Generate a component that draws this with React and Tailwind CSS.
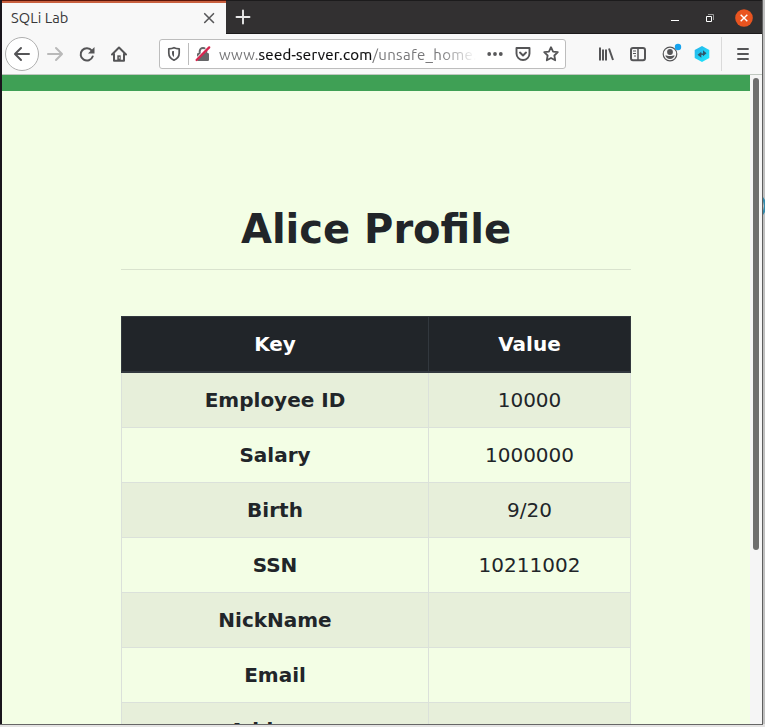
import React from "react";

const rows = [
  ["Employee ID", "10000"],
  ["Salary", "1000000"],
  ["Birth", "9/20"],
  ["SSN", "10211002"],
  ["NickName", ""],
  ["Email", ""],
  ["Address", ""],
];

function Icon({ children, className = "" }) {
  return (
    <svg
      width="16"
      height="16"
      viewBox="0 0 16 16"
      fill="none"
      stroke="#555557"
      strokeWidth="2"
      strokeLinecap="round"
      strokeLinejoin="round"
      className={"shrink-0 overflow-visible " + className}
    >
      {children}
    </svg>
  );
}

function Slot({ children }) {
  return <div className="flex h-8 w-8 shrink-0 items-center justify-center">{children}</div>;
}

function TabBar() {
  return (
    <div className="flex h-[34px] shrink-0 bg-[#323031]">
      <div className="flex w-[224px] shrink-0 flex-col border-t border-[#5e1608] bg-[#f8f8f8]">
        <div className="h-[2px] shrink-0 bg-[#c9603f]" />
        <div className="flex flex-1 items-center pb-[1px] pl-[9px] pr-[11px]">
          <span className="flex-1 text-[14.67px] leading-[18px] tracking-[0.05px] text-[#38383a]">SQLi Lab</span>
          <svg width="12" height="12" viewBox="0 0 12 12" stroke="#58585a" strokeWidth="1.6" strokeLinecap="round">
            <path d="M1.7 1.7l8.8 8.8M10.5 1.7l-8.8 8.8" />
          </svg>
        </div>
      </div>
      <div className="flex flex-1 items-center border-b border-t border-b-[#1c1b1c] border-t-[#1c1b1c] pl-[9px]">
        <svg width="16" height="16" viewBox="0 0 16 16" stroke="#e9e9e9" strokeWidth="1.9" strokeLinecap="round">
          <path d="M8 1.5v13M1.5 8h13" />
        </svg>
        <div className="ml-auto flex items-center pr-[9px] pt-px">
          <svg width="8" height="8" viewBox="0 0 8 8" className="mr-[27px]">
            <path d="M0 6.5h8" stroke="#fff" />
          </svg>
          <svg width="8" height="8" viewBox="0 0 8 8" fill="none" className="mr-[21px]">
            <path d="M2 .5h5.5v5.5" stroke="#9a9a9a" />
            <path d="M.5 2.5h5v5h-5z" stroke="#fff" />
          </svg>
          <svg width="18" height="18" viewBox="0 0 19 19">
            <circle cx="9.5" cy="9.5" r="9.3" fill="#e95420" />
            <path d="M6 6l7 7M13 6l-7 7" stroke="#fff" strokeWidth="1.5" />
          </svg>
        </div>
      </div>
    </div>
  );
}

function UrlBar() {
  return (
    <div className="ml-[24px] flex h-[30px] w-[407px] shrink-0 items-center rounded-[3px] border border-[#bdbdbd] bg-white">
      <Icon className="ml-[6px]">
        <path d="M8 1.7C6.5 2.4 4.6 2.7 2.8 2.8V7c0 3.7 1.8 5.8 5.2 7.2 3.4-1.4 5.2-3.5 5.2-7.2V2.8C11.4 2.7 9.500 2.400 8 1.700z" strokeWidth="1.7" />
        <path d="M8 5v6C6.500 10 6 8.800 6 7V5.200z" fill="#555557" stroke="none" />
      </Icon>
      <div className="ml-[6px] h-[22px] w-px bg-[#bcbcbc]" />
      <Icon className="ml-[6px]">
        <rect x="2" y="7" width="12" height="8" rx="1.3" fill="#666668" stroke="none" />
        <path d="M4.700 7V5.200a3.300 3.300 0 0 1 6.600 0V7" stroke="#666668" />
        <path d="M1.100 12.700L13.400 .4" stroke="#fff" strokeWidth="1.200" />
        <path d="M1.600 14L14.200 1.400" stroke="#d7264f" strokeWidth="2.300" />
      </Icon>
      <div className="ml-[8px] w-[257px] shrink-0 overflow-hidden whitespace-nowrap pt-px text-[15px] leading-[22px] text-[#777779] [mask-image:linear-gradient(to_right,black_86%,transparent_100%)]">
        <span className="tracking-[0.2px]">www.</span>
        <span className="tracking-[0.27px] text-[#0c0c0d] [-webkit-text-stroke:0.2px_#0c0c0d]">seed-server.com</span>
        <span className="tracking-[0.33px]">/unsafe_home.</span>
      </div>
      <Icon className="ml-[11px]">
        <g fill="#58585a" stroke="none">
          <circle cx="2.200" cy="8" r="1.900" />
          <circle cx="8" cy="8" r="1.900" />
          <circle cx="13.800" cy="8" r="1.900" />
        </g>
      </Icon>
      <Icon className="ml-[12px]">
        <path d="M1.500 2h13v5.500a6.500 6.500 0 0 1-13 0z" strokeWidth="1.900" />
        <path d="M5 6.600l3 2.800 3-2.800" />
      </Icon>
      <Icon className="ml-[12px]">
        <path d="M8 1.200l2.050 4.350 4.750.650-3.450 3.300.850 4.750L8 11.950 3.800 14.250l.850-4.750L1.200 6.200l4.750-.650z" strokeWidth="1.800" />
      </Icon>
    </div>
  );
}

function Toolbar() {
  return (
    <div className="flex h-[41px] shrink-0 items-center border-b border-[#bfc7bf] bg-[#f8f8f8] pl-[3px]">
      <div className="flex h-[34px] w-[34px] shrink-0 items-center justify-center rounded-full border border-[#afafaf] bg-white">
        <Icon>
          <path d="M15 8H1.500M7 2L1 8l6 6" />
        </Icon>
      </div>
      <Slot>
        <Icon>
          <path d="M1 8h13.500M9 2l6 6-6 6" stroke="#b9b9b9" />
        </Icon>
      </Slot>
      <Slot>
        <Icon>
          <path d="M12.800 4.600A6.200 6.200 0 1 0 13.700 10.500" />
          <path d="M15.500 1v6.500H9z" fill="#555557" stroke="none" />
        </Icon>
      </Slot>
      <Slot>
        <Icon>
          <path d="M1 8.500L8 1.500l7 7" />
          <path d="M3 8v6.700h10V8" />
          <path d="M6.300 14.500V9.300h3.400v5.200z" fill="#555557" stroke="none" />
          <path d="M8.300 11.300v1" stroke="#f8f8f8" strokeWidth=".8" />
        </Icon>
      </Slot>
      <UrlBar />
      <div className="ml-auto flex items-center">
        <Slot>
          <Icon>
            <path d="M2 1.500v13M5 3.500v11M8 3.500v11M11 2.500l4 11.500" strokeLinecap="butt" strokeWidth="2" />
          </Icon>
        </Slot>
        <Slot>
          <Icon>
            <rect x="1" y="2" width="14" height="12.300" rx="2" />
            <path d="M8 2v12" strokeWidth="1.500" />
            <path d="M3 5h3M3 7.500h3M4 10h2" strokeWidth="1" strokeLinecap="butt" />
          </Icon>
        </Slot>
        <Slot>
          <Icon>
            <circle cx="8" cy="8" r="6.800" strokeWidth="1.200" />
            <circle cx="8" cy="6" r="2.900" fill="#555557" stroke="none" />
            <path d="M3.200 9.500c1.400-.4 2 .6 4.800.6s3.400-1 4.800-.6c-.8 2-2.400 3.400-4.800 3.400s-4-1.400-4.800-3.400z" fill="#555557" stroke="none" />
            <circle cx="16" cy="1" r="3.200" fill="#16a3ee" stroke="none" />
          </Icon>
        </Slot>
        <Slot>
          <svg width="16" height="16" viewBox="0 0 16 16" className="overflow-visible">
            <defs>
              <linearGradient id="hex" x1="0" y1="0" x2="1" y2="1">
                <stop offset="0" stopColor="#25aee8" />
                <stop offset="1" stopColor="#20edff" />
              </linearGradient>
            </defs>
            <path d="M8 0l7.300 4v8L8 16 .7 12V4z" fill="url(#hex)" />
            <path d="M3.500 8.800l3.800-3v1.500l1.700.1V4.300l3.500 2.900-3.500 3V8.900l-1.700-.1v2.900z" fill="#31566a" />
          </svg>
        </Slot>
        <div className="ml-[3px] h-[34px] w-px bg-[#dadada]" />
        <div className="flex h-8 w-[40px] items-center justify-center pl-[2px]">
          <Icon>
            <path d="M3 3h10M3 8h10M3 13h10" strokeWidth="1.900" />
          </Icon>
        </div>
      </div>
    </div>
  );
}

function Profile() {
  return (
    <div className="min-w-0 flex-1 overflow-hidden bg-[#f3fee5] text-[#212529]">
      <div className="h-[16px] bg-[#3fa055]" />
      <div className="ml-[119px] w-[510px] pt-[114px]">
        <h1 className="text-center text-[40px] font-bold leading-[48px]">Alice Profile</h1>
        <div className="mt-[16px] h-px bg-[#d9e3ce]" />
        <div className="mt-[46px] grid grid-cols-[308px_202px] text-center text-[20px] leading-[30px]">
          <div className="h-[57px] border border-b-2 border-[#32383e] bg-[#212529] pt-[12px] font-bold text-white">Key</div>
          <div className="h-[57px] border border-b-2 border-l-0 border-[#32383e] bg-[#212529] pt-[12px] font-bold text-white">Value</div>
          {rows.map(([key, value], i) => {
            const shade = i % 2 === 0 ? "bg-[#e7efda]" : "bg-[#f3fee5]";
            return (
              <React.Fragment key={key}>
                <div className={"h-[55px] border-x border-b border-[#dbe1da] pt-[12px] font-bold " + shade}>{key}</div>
                <div className={"h-[55px] border-b border-r border-[#dbe1da] pt-[12px] " + shade}>{value}</div>
              </React.Fragment>
            );
          })}
        </div>
      </div>
    </div>
  );
}

export default function App() {
  return (
    <div className="flex h-[727px] w-[765px] flex-col overflow-hidden bg-[#e4e3e3]">
      <div className="flex h-[724px] shrink-0">
        <div className="w-[2px] shrink-0 bg-[#19151c]" />
        <div className="flex w-[760px] shrink-0 flex-col">
          <div className="flex shrink-0 flex-col font-['Ubuntu','Noto_Sans',sans-serif]">
            <TabBar />
            <Toolbar />
          </div>
          <div className="flex min-h-0 flex-1 font-['DejaVu_Sans',sans-serif]">
            <Profile />
            <div className="w-[12px] shrink-0 bg-[#f5f5f5] px-[3px] pt-[3px]">
              <div className="h-[472px] rounded-full bg-[#6e6e6e]" />
            </div>
          </div>
        </div>
        <div className="w-px shrink-0 bg-[#5f5f5f]" />
        <div className="w-[2px] shrink-0 overflow-hidden bg-[#c0c0c0] pt-[197px]">
          <svg width="2" height="18" viewBox="0 0 2 18">
            <path d="M0 0l2 3v12l-2 3v-4l1-5-1-5z" fill="#338bad" />
          </svg>
        </div>
      </div>
      <div className="h-px w-[763px] shrink-0 bg-[#666]" />
    </div>
  );
}
